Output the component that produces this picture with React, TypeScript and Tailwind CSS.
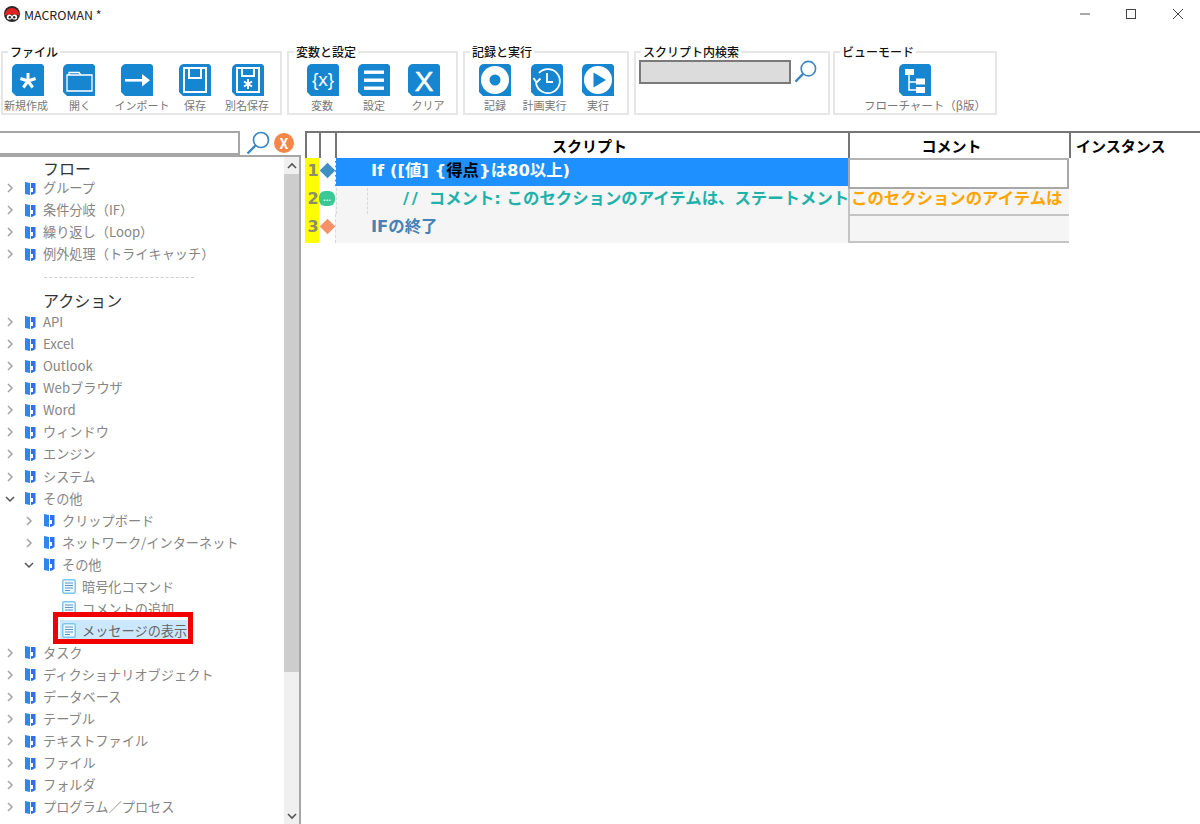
import React from "react"

const tileShape = "M5 0H30L32 2V32H4L0 28V5A5 5 0 0 1 5 0Z"

function Tile({ children }: { children: React.ReactNode }) {
  return (
    <svg width="32" height="32" viewBox="0 0 32 32" className="block">
      <path d={tileShape} fill="#1586cf" />
      {children}
    </svg>
  )
}

const toolIcons: Record<string, React.ReactNode> = {
  star: (
    <g stroke="#fff" strokeWidth="3">
      <path d="M16 17V9M16 17L23.6 14.5M16 17L20.7 23.5M16 17L11.3 23.5M16 17L8.4 14.5" />
    </g>
  ),
  folder: (
    <g stroke="#fff" strokeWidth="1.3" fill="none">
      <path d="M4 11H29V27H4Z" />
      <path d="M6 11V8.5H16L18 11" />
    </g>
  ),
  arrow: (
    <g fill="#fff">
      <rect x="4" y="15" width="20" height="2.6" />
      <path d="M21 10L29 16.3L21 22.5Z" />
    </g>
  ),
  save: (
    <g stroke="#fff" strokeWidth="2" fill="none">
      <path d="M5 4H27V28H5Z" />
      <path d="M10 4V14H22V4" />
    </g>
  ),
  saveas: (
    <g stroke="#fff" fill="none">
      <path d="M5 4H27V28H5Z" strokeWidth="2" />
      <path d="M10 4V12H22V4" strokeWidth="2" />
      <path d="M16 15V25M12 17.5L20 22.5M20 17.5L12 22.5" strokeWidth="2" />
    </g>
  ),
  vars: (
    <text x="16" y="22" textAnchor="middle" fill="#fff" fontSize="19" fontFamily="'Liberation Sans', sans-serif">
      {"{x}"}
    </text>
  ),
  menu: (
    <g fill="#fff">
      <rect x="6" y="6.5" width="20" height="3.4" />
      <rect x="6" y="14.5" width="20" height="3.4" />
      <rect x="6" y="22.5" width="20" height="3.4" />
    </g>
  ),
  clear: (
    <text x="16" y="27" textAnchor="middle" fill="#fff" fontSize="28" stroke="#fff" strokeWidth="0.5" fontFamily="'Liberation Sans', sans-serif">
      X
    </text>
  ),
  record: (
    <g>
      <circle cx="16" cy="16" r="14" fill="#fff" />
      <circle cx="16" cy="16" r="5.5" fill="#1586cf" />
    </g>
  ),
  clock: (
    <g stroke="#fff" strokeWidth="1.8" fill="none">
      <path d="M8 9A12 12 0 1 1 5 19" />
      <path d="M16 9V18H22" />
      <path d="M2.5 14L5.5 18.5L9.5 14.5" />
    </g>
  ),
  play: (
    <g>
      <circle cx="16" cy="16" r="14" fill="#fff" />
      <path d="M11.5 8.5L24 16L11.5 23.5Z" fill="#1586cf" />
    </g>
  ),
  flow: (
    <g>
      <path d="M10 10V26H18M10 18H18" stroke="#fff" strokeWidth="1.5" fill="none" />
      <rect x="6" y="5" width="9" height="6" fill="#fff" />
      <rect x="17" y="14.5" width="9" height="6" fill="#fff" />
      <rect x="17" y="23" width="9" height="6" fill="#fff" />
    </g>
  ),
}

function ToolButton({ icon, label, w, labelClass = "" }: { icon: string; label: string; w: string; labelClass?: string }) {
  return (
    <div className={`flex flex-col items-center ${w}`}>
      <Tile>{toolIcons[icon]}</Tile>
      <span className={`mt-[2px] text-[11px] leading-[14px] whitespace-nowrap text-[#777] ${labelClass}`}>{label}</span>
    </div>
  )
}

function Group({ title, className, children }: { title: string; className: string; children?: React.ReactNode }) {
  return (
    <fieldset className={`h-[71px] shrink-0 border-2 border-[#e6e6e6] ${className}`}>
      <legend className="ml-[5px] px-[2px] text-[12px] leading-[16px] font-medium text-[#111]">{title}</legend>
      {children}
    </fieldset>
  )
}

function Magnifier({ size }: { size: number }) {
  return (
    <svg width={size} height={size} viewBox="0 0 24 24" fill="none" stroke="#3c86c4" strokeWidth="1.7">
      <circle cx="15" cy="9" r="7.5" />
      <path d="M9.5 14.5L1.5 22.5" strokeWidth="2.4" />
    </svg>
  )
}

function BookIcon() {
  return (
    <svg width="12" height="15" viewBox="0 0 12 15" className="shrink-0">
      <path d="M1 1L6 2V14L1 13Z" fill="#2f86ee" />
      <path d="M7 2H11.5V12L9 13.5L7 14Z" fill="#2f6ff0" />
      <path d="M7 7H9V11H7Z" fill="#fff" />
    </svg>
  )
}

function LeafIcon() {
  return (
    <svg width="14" height="15" viewBox="0 0 14 15" className="shrink-0">
      <rect x="0.75" y="0.75" width="12.5" height="13.5" rx="1.5" fill="#eef8fe" stroke="#7cc7ee" strokeWidth="1.5" />
      <path d="M3 4H11M3 6.5H11M3 9H11M3 11.5H8" stroke="#5b93c4" strokeWidth="1.1" />
    </svg>
  )
}

function Chevron({ open }: { open?: boolean }) {
  return (
    <svg width="10" height="10" viewBox="0 0 10 10" fill="none" className="shrink-0">
      {open ? (
        <path d="M1 3L5 7L9 3" stroke="#555" strokeWidth="1.5" />
      ) : (
        <path d="M3 1L7 5L3 9" stroke="#a3a3a3" strokeWidth="1.5" />
      )}
    </svg>
  )
}

const treeText = "ml-[7px] text-[13.2px] leading-[20px] whitespace-nowrap text-[#858585]"

function Row({ label, open }: { label: string; open?: boolean }) {
  return (
    <div className="flex h-[22.05px] items-center pl-[5px]">
      <Chevron open={open} />
      <span className="ml-[9px]"><BookIcon /></span>
      <span className={treeText}>{label}</span>
    </div>
  )
}

function SubRow({ label, open }: { label: string; open?: boolean }) {
  return (
    <div className="flex h-[22.05px] items-center pl-[24px]">
      <Chevron open={open} />
      <span className="ml-[9px]"><BookIcon /></span>
      <span className={treeText}>{label}</span>
    </div>
  )
}

function LeafRow({ label }: { label: string }) {
  return (
    <div className="flex h-[22.05px] items-center pl-[62px]">
      <LeafIcon />
      <span className="ml-[6px] text-[13.2px] leading-[20px] whitespace-nowrap text-[#858585]">{label}</span>
    </div>
  )
}

const flowItems = ["グループ", "条件分岐（IF）", "繰り返し（Loop）", "例外処理（トライキャッチ）"]
const actionItems = ["API", "Excel", "Outlook", "Webブラウザ", "Word", "ウィンドウ", "エンジン", "システム"]
const afterItems = ["タスク", "ディクショナリオブジェクト", "データベース", "テーブル", "テキストファイル", "ファイル", "フォルダ", "プログラム／プロセス"]

function Sidebar() {
  return (
    <div className="flex w-[301px] shrink-0 flex-col">
      <div className="flex h-[24px] items-center">
        <div className="h-[24px] w-[240px] border-y-2 border-r-2 border-[#a6a6a6] bg-white" />
        <span className="ml-[6px]"><Magnifier size={24} /></span>
        <span className="ml-[4px] flex h-[20px] w-[20px] items-center justify-center rounded-full bg-[#f58549] text-[14px] font-bold text-white">X</span>
      </div>
      <div className="flex h-[669px] border-t-2 border-r-2 border-[#a6a6a6]">
        <div className="flex-1 overflow-hidden pt-[2px]">
          <div className="flex h-[18px] items-center pl-[43px] text-[16px] leading-[18px] text-[#333]">フロー</div>
          {flowItems.map((t) => <Row key={t} label={t} />)}
          <div className="h-[25px] pt-[12px] pl-[44px]">
            <div className="w-[150px] border-t border-dashed border-[#cfcfcf]" />
          </div>
          <div className="flex h-[21px] items-center pl-[43px] text-[16px] leading-[21px] text-[#333]">アクション</div>
          {actionItems.map((t) => <Row key={t} label={t} />)}
          <Row label="その他" open />
          <SubRow label="クリップボード" />
          <SubRow label="ネットワーク/インターネット" />
          <SubRow label="その他" open />
          <LeafRow label="暗号化コマンド" />
          <LeafRow label="コメントの追加" />
          <div className="flex h-[22.05px] items-center pl-[60px]">
            <div className="relative flex h-[22px] w-[128px] items-center bg-[#cce8ff] pl-[2px]">
              <LeafIcon />
              <span className="ml-[6px] text-[13.2px] leading-[20px] whitespace-nowrap text-[#666]">メッセージの表示</span>
              <div className="absolute -top-[8px] -right-[5px] -bottom-[2px] -left-[7px] border-[5px] border-[#f00000]" />
            </div>
          </div>
          {afterItems.map((t) => <Row key={t} label={t} />)}
        </div>
        <div className="flex w-[15px] flex-col items-center bg-[#f0f0f0]">
          <div className="flex h-[17px] items-center justify-center">
            <svg width="10" height="8" viewBox="0 0 10 8" fill="none"><path d="M1 6L5 2L9 6" stroke="#555" strokeWidth="1.6" /></svg>
          </div>
          <div className="h-[498px] w-full bg-[#cdcdcd]" />
          <div className="flex-1" />
          <div className="flex h-[17px] items-center justify-center">
            <svg width="10" height="8" viewBox="0 0 10 8" fill="none"><path d="M1 2L5 6L9 2" stroke="#555" strokeWidth="1.6" /></svg>
          </div>
        </div>
      </div>
    </div>
  )
}

const columns = "grid grid-cols-[14px_16px_513px_221px_1fr]"
const headCell = "flex items-center justify-center border-l-2 border-[#757575] text-[15px] leading-[20px] font-bold text-black"
const rowFont = "pt-[2px] font-['DejaVu_Sans','Noto_Sans_CJK_JP',sans-serif] text-[16.4px] leading-[22px] font-bold whitespace-nowrap"

function LineNo({ n }: { n: number }) {
  return (
    <div className="bg-[#ffff00] pt-[2px] pl-[2px] text-center font-['DejaVu_Sans',sans-serif] text-[16px] leading-[22px] font-bold text-[#8c8c6a]">
      {n}
    </div>
  )
}

function ScriptGrid() {
  return (
    <div className="ml-[4px] flex-1">
      <div className={`${columns} h-[27px] border-t-2 border-[#757575]`}>
        <div className={headCell} />
        <div className={headCell} />
        <div className={`${headCell} pr-[6px]`}>スクリプト</div>
        <div className={`${headCell} pr-[16px]`}>コメント</div>
        <div className="flex items-center border-l-2 border-[#757575] pl-[5px] text-[15px] leading-[20px] font-bold text-black">インスタンス</div>
      </div>

      <div className={`${columns} h-[28px]`}>
        <LineNo n={1} />
        <div className="flex h-[24px] items-center justify-center">
          <span className="h-[11px] w-[11px] shrink-0 rotate-45 bg-[#3d8fc4]" />
        </div>
        <div className={`overflow-hidden border-l border-dashed border-white bg-[#1e90ff] pl-[35px] text-white ${rowFont}`}>
          If ([値] {"{"}<span className="text-black">得点</span>{"}"}は80以上)
        </div>
        <div className="z-10 h-[31px] border-2 border-[#a8a8a8] border-t-[#b4b4b4] bg-white" />
        <div />
      </div>

      <div className={`${columns} h-[28px]`}>
        <LineNo n={2} />
        <div className="flex h-[24px] items-center justify-center">
          <span className="flex h-[15px] w-[16px] shrink-0 items-center justify-center rounded-[6px] bg-[#3cc896] text-[8px] leading-[8px] font-bold text-white">...</span>
        </div>
        <div className={`flex overflow-hidden bg-[#f5f5f5] pl-[1px] text-[#20b2aa] ${rowFont}`}>
          <div className="h-full border-l border-dashed border-[#d8d8d8]" />
          <div className="ml-[30px] h-full border-l border-dashed border-[#d8d8d8]" />
          <span className="ml-[35px]"><span className="tracking-[2.7px]">// </span>コメント: このセクションのアイテムは、ステートメント</span>
        </div>
        <div className={`overflow-hidden border-l-2 border-[#c4c4c4] bg-[#f5f5f5] pl-[1px] text-[#ffa500] ${rowFont}`}>
          このセクションのアイテムは
        </div>
        <div />
      </div>

      <div className={`${columns} h-[29px]`}>
        <LineNo n={3} />
        <div className="flex h-[24px] items-center justify-center">
          <span className="h-[11px] w-[11px] shrink-0 rotate-45 bg-[#f5926a]" />
        </div>
        <div className={`border-l border-dashed border-[#d8d8d8] bg-[#f5f5f5] pl-[35px] text-[#4682b4] ${rowFont}`}>
          IFの終了
        </div>
        <div className="border-2 border-r-0 border-[#c4c4c4] bg-[#f5f5f5]" />
        <div />
      </div>
    </div>
  )
}

export default function App() {
  return (
    <div className="h-[824px] w-[1200px] overflow-hidden bg-white font-['Noto_Sans_CJK_JP',sans-serif]">
      <div className="mb-[16px] flex h-[28px] items-center pl-[4px]">
        <svg width="16" height="16" viewBox="0 0 16 16" className="shrink-0">
          <circle cx="8" cy="8" r="8" fill="#2a2a2a" />
          <path d="M0.5 9.5A7.5 7.5 0 0 1 15.5 9.5C13 8 3 8 0.5 9.5Z" fill="#e02424" />
          <circle cx="5.4" cy="11" r="2.6" fill="#fff" />
          <circle cx="10.6" cy="11" r="2.6" fill="#fff" />
          <circle cx="5.8" cy="11.2" r="1.2" fill="#222" />
          <circle cx="10.2" cy="11.2" r="1.2" fill="#222" />
        </svg>
        <span className="ml-[4px] pt-[1px] text-[12.4px] leading-[16px] text-[#222]">MACROMAN *</span>
        <div className="ml-auto flex items-center text-[#333]">
          <svg width="46" height="12" viewBox="0 0 46 12" fill="none"><path d="M18 6H28" stroke="#555" strokeWidth="1" /></svg>
          <svg width="46" height="12" viewBox="0 0 46 12" fill="none"><rect x="18.5" y="1.5" width="9" height="9" stroke="#444" strokeWidth="1" /></svg>
          <svg width="46" height="12" viewBox="0 0 46 12" fill="none"><path d="M19 1L29 11M29 1L19 11" stroke="#444" strokeWidth="1" /></svg>
        </div>
      </div>

      <div className="flex h-[87px] items-start pl-[1px]">
        <Group title="ファイル" className="w-[281px]">
          <div className="mt-[4px] flex">
            <ToolButton icon="star" label="新規作成" w="w-[50px]" labelClass="mr-[4px]" />
            <ToolButton icon="folder" label="開く" w="w-[52px]" labelClass="ml-[2px]" />
            <ToolButton icon="arrow" label="インポート" w="w-[64px]" labelClass="ml-[10px]" />
            <ToolButton icon="save" label="保存" w="w-[52px]" />
            <ToolButton icon="saveas" label="別名保存" w="w-[54px]" labelClass="mr-[2px]" />
          </div>
        </Group>
        <Group title="変数と設定" className="ml-[5px] w-[171px]">
          <div className="mt-[4px] flex pl-[8px]">
            <ToolButton icon="vars" label="変数" w="w-[52px]" labelClass="mr-[2px]" />
            <ToolButton icon="menu" label="設定" w="w-[50px]" />
            <ToolButton icon="clear" label="クリア" w="w-[50px]" labelClass="ml-[8px]" />
          </div>
        </Group>
        <Group title="記録と実行" className="ml-[5px] w-[166px]">
          <div className="mt-[4px] flex pl-[4px]">
            <ToolButton icon="record" label="記録" w="w-[52px]" />
            <ToolButton icon="clock" label="計画実行" w="w-[51px]" labelClass="mr-[4px]" />
            <ToolButton icon="play" label="実行" w="w-[52px]" />
          </div>
        </Group>
        <Group title="スクリプト内検索" className="ml-[5px] w-[196px]">
          <div className="flex items-start pl-[3px]">
            <div className="h-[24px] w-[152px] border-2 border-[#7a7a7a] bg-[#dcdcdc]" />
            <span className="ml-[3px]"><Magnifier size={23} /></span>
          </div>
        </Group>
        <Group title="ビューモード" className="ml-[3px] w-[164px]">
          <div className="mt-[4px] flex flex-col items-center">
            <Tile>{toolIcons.flow}</Tile>
            <span className="mt-[2px] ml-[20px] text-[11.5px] leading-[14px] whitespace-nowrap text-[#777]">フローチャート（β版）</span>
          </div>
        </Group>
      </div>

      <div className="flex">
        <Sidebar />
        <ScriptGrid />
      </div>
    </div>
  )
}
